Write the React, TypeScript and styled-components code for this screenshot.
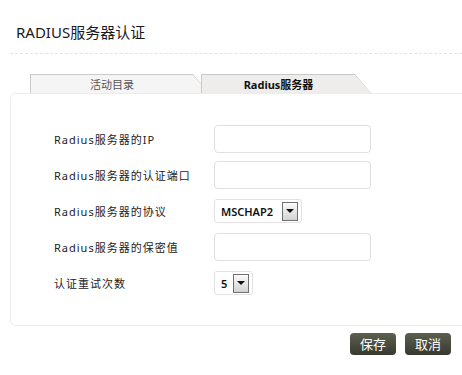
import { Fragment } from 'react';
import styled, { createGlobalStyle } from 'styled-components';

const GlobalStyle = createGlobalStyle`
  html, body {
    margin: 0;
    padding: 0;
    background: #ffffff;
    overflow: hidden;
  }
  body {
    font-family: 'Noto Sans', 'Noto Sans CJK SC', sans-serif;
    color: #333;
  }
`;

const Page = styled.div`
  width: 462px;
  height: 375px;
  overflow: hidden;
`;

const Header = styled.div`
  margin-left: 10px;
  padding: 22px 6px 11px;
  height: 20px;
  border-bottom: 1px dashed #e4e4e4;
`;

const Title = styled.h1`
  margin: 0;
  font-size: 15px;
  font-weight: 400;
  line-height: 20px;
  color: #1a1a1a;
`;

const TabRow = styled.div`
  display: flex;
  margin: 20px 0 0 30px;
  height: 19px;
`;

const Tab = styled.div<{ $first?: boolean; $active?: boolean }>`
  position: relative;
  z-index: ${(p) => (p.$active ? 2 : 1)};
  width: ${(p) => (p.$first ? '178px' : '169px')};
  margin-left: ${(p) => (p.$first ? '0' : '-8px')};
  padding: 1px 0 0 1px;
  background: #c9c9c9;
  clip-path: polygon(0 0, calc(100% - 16px) 0, 100% 100%, 0 100%);
`;

const TabFace = styled.div<{ $active?: boolean }>`
  display: flex;
  align-items: center;
  justify-content: center;
  height: 18px;
  padding-right: 16px;
  background: ${(p) => (p.$active ? '#eeedeb' : '#f5f5f5')};
  clip-path: polygon(0 0, calc(100% - 16px) 0, 100% 100%, 0 100%);
  font-size: 11px;
  font-weight: ${(p) => (p.$active ? 700 : 400)};
  color: ${(p) => (p.$active ? '#111' : '#555')};
`;

const Panel = styled.div`
  margin-left: 10px;
  width: 480px;
  height: 233px;
  padding-top: 27px;
  box-sizing: border-box;
  border: 1px solid #ececec;
  border-radius: 5px;
`;

const Form = styled.div`
  display: grid;
  grid-template-columns: 160px 1fr;
  grid-auto-rows: 36px;
  padding-left: 43px;
  align-items: center;
`;

const Label = styled.label`
  font-size: 11px;
  letter-spacing: 1px;
  color: #222;
  font-weight: 400;
`;

const TextInput = styled.input`
  width: 157px;
  height: 28px;
  box-sizing: border-box;
  border: 1px solid #dfdfdf;
  border-radius: 4px;
  background: #fff;
  outline: none;
`;

const SelectBox = styled.div<{ $width: number }>`
  display: flex;
  align-items: center;
  justify-content: space-between;
  width: ${(p) => p.$width}px;
  height: 24px;
  box-sizing: border-box;
  padding: 0 3px 0 6px;
  border: 1px solid #e2e2e2;
  border-radius: 3px;
  font-size: 11px;
  font-weight: 600;
  color: #111;
`;

const DropButton = styled.span`
  display: flex;
  align-items: center;
  justify-content: center;
  width: 16px;
  height: 19px;
  box-sizing: border-box;
  border: 1px solid #707070;
  background: linear-gradient(#fbfbfb, #d2d2d2);

  &::after {
    content: '';
    border-left: 4px solid transparent;
    border-right: 4px solid transparent;
    border-top: 4px solid #111;
  }
`;

const Actions = styled.div`
  display: flex;
  justify-content: flex-end;
  gap: 9px;
  margin-top: 7px;
  padding-right: 11px;
`;

const Button = styled.button`
  width: 46px;
  height: 22px;
  padding: 0;
  border: none;
  border-radius: 4px;
  background: linear-gradient(#5c604f, #363930);
  color: #fff;
  font-family: 'Noto Sans CJK SC', sans-serif;
  font-size: 13px;
  line-height: 22px;
`;

const rows = [
  { label: 'Radius服务器的IP', kind: 'input' },
  { label: 'Radius服务器的认证端口', kind: 'input' },
  { label: 'Radius服务器的协议', kind: 'select', value: 'MSCHAP2', width: 88 },
  { label: 'Radius服务器的保密值', kind: 'input' },
  { label: '认证重试次数', kind: 'select', value: '5', width: 39 },
];

export default function App() {
  return (
    <Page>
      <GlobalStyle />
      <Header>
        <Title>RADIUS服务器认证</Title>
      </Header>
      <TabRow>
        <Tab $first>
          <TabFace>活动目录</TabFace>
        </Tab>
        <Tab $active>
          <TabFace $active>Radius服务器</TabFace>
        </Tab>
      </TabRow>
      <Panel>
        <Form>
          {rows.map((r) => (
            <Fragment key={r.label}>
              <Label>{r.label}</Label>
              {r.kind === 'input' ? (
                <TextInput type='text' />
              ) : (
                <SelectBox $width={r.width ?? 80}>
                  <span>{r.value}</span>
                  <DropButton />
                </SelectBox>
              )}
            </Fragment>
          ))}
        </Form>
      </Panel>
      <Actions>
        <Button>保存</Button>
        <Button>取消</Button>
      </Actions>
    </Page>
  );
}
